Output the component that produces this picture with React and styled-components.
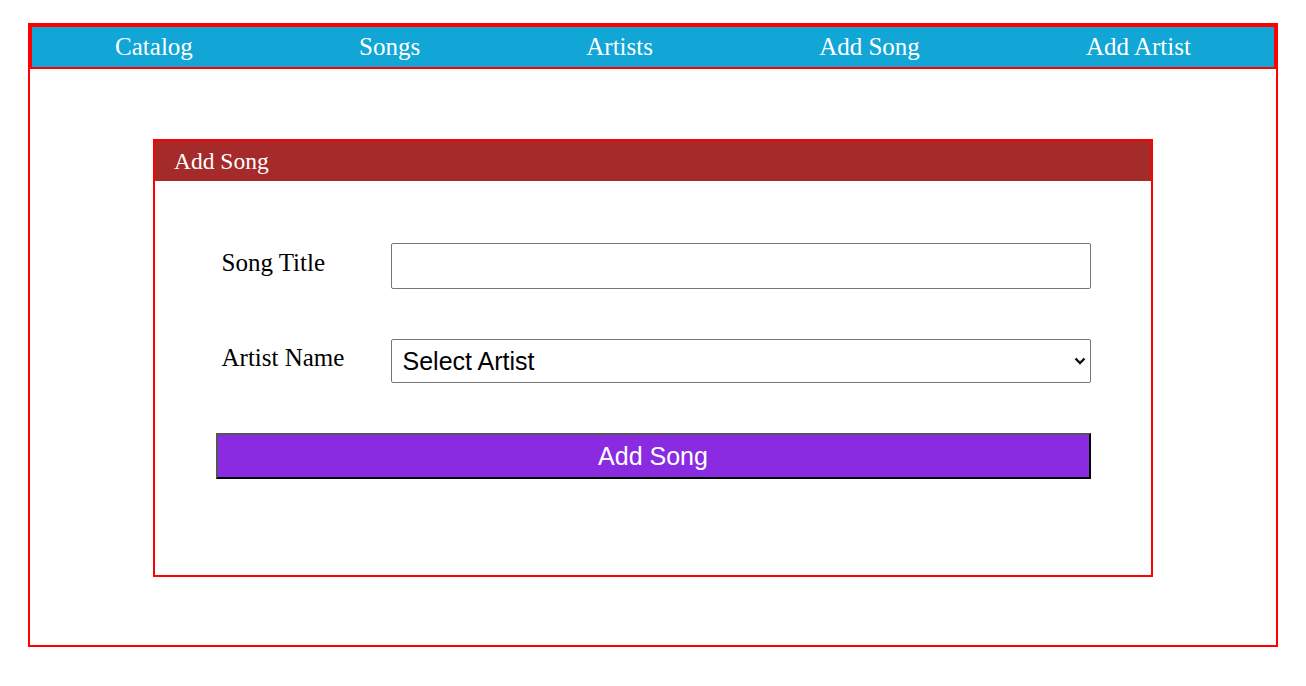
import React from 'react';
import styled, { createGlobalStyle } from 'styled-components';

const GlobalStyle = createGlobalStyle`
  * {
    box-sizing: border-box;
  }

  body {
    margin: 0;
    background: #fff;
    font-family: "Liberation Serif", "Times New Roman", serif;
  }
`;

const StyledWrapper = styled.div`
  width: 1250px;
  height: 624px;
  margin: 23px auto 0;
  border: 2px solid #ff0000;
`;

const StyledNav = styled.nav`
  display: flex;
  justify-content: space-around;
  align-items: center;
  height: 44px;
  border: 2px solid #ff0000;
  background-color: #11a6d6;
`;

const StyledNavLink = styled.a`
  color: #fff;
  font-size: 25px;
  line-height: 40px;
  text-decoration: none;
  cursor: pointer;
`;

const StyledCard = styled.section`
  width: 1000px;
  margin: 70px auto 0;
  border: 2px solid #ff0000;
`;

const StyledCardHeader = styled.h2`
  margin: 0;
  height: 40px;
  padding: 0 19px;
  background-color: #a52a2a;
  color: #fff;
  font-size: 23.5px;
  font-weight: normal;
  line-height: 40px;
`;

const StyledForm = styled.form`
  width: 875px;
  margin: 0 auto;
  padding: 62px 0 96px;
  display: flex;
  flex-direction: column;
  gap: 50px;
`;

const StyledRow = styled.div`
  display: flex;
  align-items: flex-start;
`;

const StyledLabel = styled.label`
  width: 175px;
  padding: ${({ offset }) => offset}px 0 0 6px;
  font-size: 25px;
  color: #000;
`;

const StyledInput = styled.input`
  width: 700px;
  height: 46px;
  padding: 0 10px;
  border: 1px solid #767676;
  border-radius: 2px;
  font-family: "Liberation Sans", Arial, sans-serif;
  font-size: 25px;
`;

const StyledSelectWrap = styled.div`
  position: relative;
  width: 700px;
  height: 44px;
`;

const StyledSelect = styled.select`
  appearance: none;
  width: 100%;
  height: 100%;
  padding: 0 30px 0 11px;
  border: 1px solid #767676;
  border-radius: 2px;
  background: #fff;
  color: #000;
  font-family: "Liberation Sans", Arial, sans-serif;
  font-size: 25px;
`;

const StyledChevron = styled.svg`
  position: absolute;
  top: 18px;
  right: 5px;
  width: 12px;
  height: 8px;
  pointer-events: none;
`;

const StyledButton = styled.button`
  width: 875px;
  height: 46px;
  border: 2px solid;
  border-color: #555 #000 #000 #555;
  background-color: #8a2be2;
  color: #fff;
  font-family: "Liberation Sans", Arial, sans-serif;
  font-size: 25px;
  cursor: pointer;
`;

const links = ['Catalog', 'Songs', 'Artists', 'Add Song', 'Add Artist'];

const App = () => (
  <>
    <GlobalStyle />
    <StyledWrapper>
      <StyledNav>
        {links.map((link) => (
          <StyledNavLink key={link}>{link}</StyledNavLink>
        ))}
      </StyledNav>

      <StyledCard>
        <StyledCardHeader>Add Song</StyledCardHeader>
        <StyledForm onSubmit={(e) => e.preventDefault()}>
          <StyledRow>
            <StyledLabel htmlFor="title" offset={6}>
              Song Title
            </StyledLabel>
            <StyledInput id="title" type="text" />
          </StyledRow>
          <StyledRow>
            <StyledLabel htmlFor="artist" offset={5}>
              Artist Name
            </StyledLabel>
            <StyledSelectWrap>
              <StyledSelect id="artist" defaultValue="">
                <option value="">Select Artist</option>
              </StyledSelect>
              <StyledChevron viewBox="0 0 12 8">
                <path d="M1.5 1.5 L6 6 L10.5 1.5" fill="none" stroke="#111" strokeWidth="2.4" />
              </StyledChevron>
            </StyledSelectWrap>
          </StyledRow>
          <StyledButton type="submit">Add Song</StyledButton>
        </StyledForm>
      </StyledCard>
    </StyledWrapper>
  </>
);

export default App;
